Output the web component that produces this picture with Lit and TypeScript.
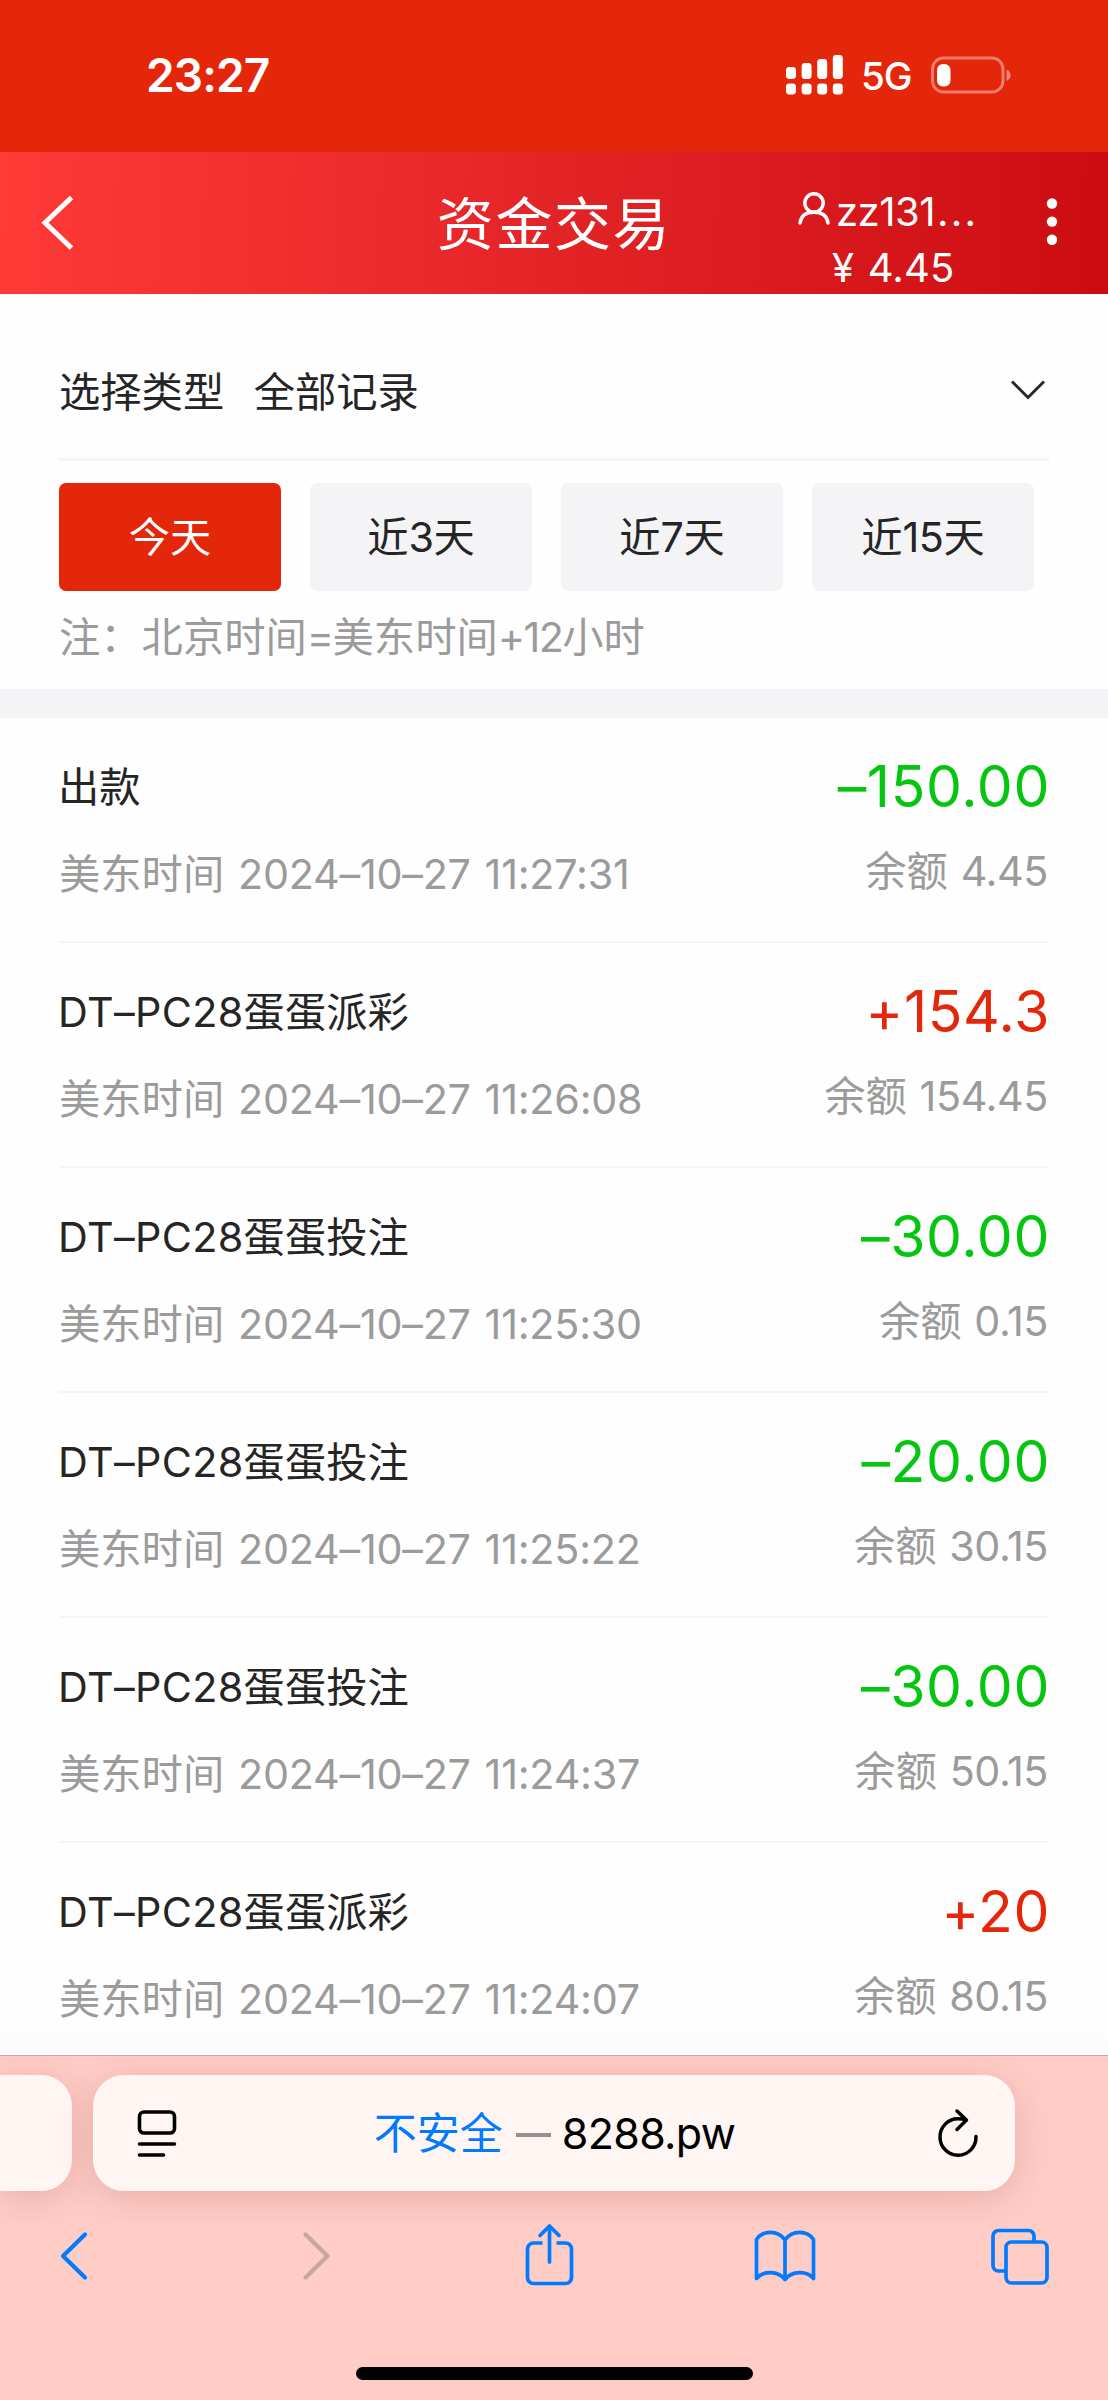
import { LitElement, html, css, svg } from "lit";
import { customElement, property } from "lit/decorators.js";
import { classMap } from "lit/directives/class-map.js";

interface Entry {
  title: string;
  latin: string;
  time: string;
  amount: string;
  balance: string;
}

const ENTRIES: Entry[] = [
  { latin: "", title: "出款", time: "11:27:31", amount: "–150.00", balance: "4.45" },
  { latin: "DT–PC28", title: "蛋蛋派彩", time: "11:26:08", amount: "+154.3", balance: "154.45" },
  { latin: "DT–PC28", title: "蛋蛋投注", time: "11:25:30", amount: "–30.00", balance: "0.15" },
  { latin: "DT–PC28", title: "蛋蛋投注", time: "11:25:22", amount: "–20.00", balance: "30.15" },
  { latin: "DT–PC28", title: "蛋蛋投注", time: "11:24:37", amount: "–30.00", balance: "50.15" },
  { latin: "DT–PC28", title: "蛋蛋派彩", time: "11:24:07", amount: "+20", balance: "80.15" },
];

const TABS: [string, string, string][] = [
  ["今天", "", ""],
  ["近", "3", "天"],
  ["近", "7", "天"],
  ["近", "15", "天"],
];

@customElement("status-bar")
class StatusBar extends LitElement {
  static styles = css`
    :host {
      display: flex;
      align-items: center;
      height: 152px;
      box-sizing: border-box;
      padding: 0 97px 2px 146px;
      background: #e4260a;
      color: #fff;
    }
    .clock {
      flex: 1;
      font-size: 46px;
      font-weight: 600;
      letter-spacing: -0.9px;
    }
    .signal {
      width: 57px;
      height: 40px;
    }
    .network {
      margin: 2px 21px 0 18px;
      width: 49px;
      font-size: 38.5px;
      font-weight: 500;
      letter-spacing: -1px;
      white-space: nowrap;
    }
    .battery {
      width: 80px;
      height: 38px;
    }
    svg {
      display: block;
    }
  `;
  render() {
    return html`
      <div class="clock">23:27</div>
      <svg class="signal" viewBox="0 0 57 40" fill="#fff">
        ${[12, 8, 4, 0].map(
          (top, i) => svg`
            <rect x=${i * 15.6} y=${top} width="10" height=${24 - top} rx="3.4"></rect>
            <rect x=${i * 15.6} y="28.5" width="10" height="11" rx="3.4"></rect>`
        )}
      </svg>
      <div class="network">5G</div>
      <svg class="battery" viewBox="0 0 80 38">
        <rect x="1.5" y="2" width="70.5" height="34" rx="11" fill="none" stroke="#fff" stroke-opacity=".4" stroke-width="3"></rect>
        <rect x="6" y="8" width="13.5" height="22.5" rx="6" fill="#fff"></rect>
        <path d="M75.5 13.5c5.4 2.4 5.4 9 0 11.6z" fill="#fff" fill-opacity=".45"></path>
      </svg>
    `;
  }
}

@customElement("title-bar")
class TitleBar extends LitElement {
  static styles = css`
    :host {
      display: grid;
      grid-template-columns: 430px 245px 1fr 110px;
      height: 141.5px;
      background: linear-gradient(92deg, #ff3a37 0%, #e32427 50%, #cb0d12 100%);
      color: #fff;
    }
    svg {
      display: block;
    }
    .back {
      width: 40px;
      height: 60px;
      margin: 41px 0 0 39px;
    }
    .title {
      padding: 3px 0 0 3px;
      text-align: center;
      font-size: 57px;
      line-height: 140px;
      letter-spacing: 1.6px;
      white-space: nowrap;
    }
    .account {
      padding-top: 32px;
      font-size: 40px;
      line-height: 56px;
      white-space: nowrap;
    }
    .user {
      display: flex;
      padding-left: 122px;
    }
    .user svg {
      width: 34px;
      height: 34px;
      margin: 7px 5px 0 0;
    }
    .name {
      letter-spacing: -0.5px;
    }
    .ellipsis {
      margin-left: 2px;
      letter-spacing: 2.2px;
    }
    .money {
      padding-left: 157px;
      letter-spacing: 0.2px;
      word-spacing: 2px;
    }
    .more {
      width: 12px;
      height: 50px;
      margin: 45px 0 0 48px;
    }
  `;
  render() {
    return html`
      <svg class="back" viewBox="0 0 40 60" fill="none" stroke="#fff" stroke-width="5">
        <path d="M32.5 4.5 6 29.8 32.5 55"></path>
      </svg>
      <div class="title">资金交易</div>
      <div class="account">
        <div class="user">
          <svg viewBox="0 0 34 34" fill="none" stroke="#fff" stroke-width="3.4" stroke-linecap="round">
            <circle cx="17" cy="12" r="9.2"></circle>
            <path d="M3 32C4 24.5 9.5 21.200 17 21.200S30 24.500 31 32"></path>
          </svg>
          <span class="name">zz131</span><span class="ellipsis">...</span>
        </div>
        <div class="money">¥ 4.45</div>
      </div>
      <svg class="more" viewBox="0 0 12 50" fill="#fff">
        <circle cx="6" cy="6.500" r="5.200"></circle>
        <circle cx="6" cy="24.600" r="5.200"></circle>
        <circle cx="6" cy="42.700" r="5.200"></circle>
      </svg>
    `;
  }
}

@customElement("record-filter")
class RecordFilter extends LitElement {
  static styles = css`
    :host {
      display: block;
      height: 395.5px;
      box-sizing: border-box;
      padding: 0 59px;
      color: #252525;
      font-size: 41.3px;
    }
    .type {
      display: flex;
      align-items: center;
      height: 167.5px;
      box-sizing: border-box;
      padding-top: 26px;
      border-bottom: 3px solid #f4f4f7;
    }
    .value {
      flex: 1;
      margin-left: 29.500px;
    }
    .arrow {
      width: 36px;
      height: 22px;
      margin: 2px 3px 0 0;
    }
    .tabs {
      display: flex;
      gap: 29px;
      margin-top: 21.500px;
    }
    .tab {
      width: 222px;
      height: 108px;
      line-height: 108px;
      border-radius: 7px;
      background: #f4f4f7;
      text-align: center;
    }
    .active {
      background: #e4260a;
      color: #fff;
    }
    .num {
      letter-spacing: -0.5px;
    }
    .note {
      margin-top: 16px;
      line-height: 60px;
      color: #9b9b9b;
      white-space: nowrap;
    }
    .note .num {
      letter-spacing: -1.600px;
    }
  `;
  render() {
    return html`
      <div class="type">
        <span>选择类型</span>
        <span class="value">全部记录</span>
        <svg class="arrow" viewBox="0 0 36 22" fill="none" stroke="#252525" stroke-width="2.800">
          <path d="M2 2.500 18 18.500 34 2.500"></path>
        </svg>
      </div>
      <div class="tabs">
        ${TABS.map(
          ([a, n, b], i) =>
            html`<div class=${classMap({ tab: true, active: i === 0 })}>${a}<span class="num">${n}</span>${b}</div>`
        )}
      </div>
      <div class="note">注：北京时间<span class="num">=</span>美东时间<span class="num">+12</span>小时</div>
    `;
  }
}

@customElement("record-row")
class RecordRow extends LitElement {
  @property({ attribute: false }) entry!: Entry;
  static styles = css`
    :host {
      display: grid;
      grid-template-columns: 1fr auto;
      grid-template-rows: 60px 60px;
      row-gap: 27px;
      height: 225px;
      box-sizing: border-box;
      margin: 0 59px;
      padding-top: 39px;
      border-bottom: 2px solid #f4f4f5;
      font-size: 41.3px;
      line-height: 60px;
      color: #252525;
      white-space: nowrap;
    }
    .latin {
      margin-left: -1px;
      letter-spacing: 0.350px;
    }
    .amount {
      margin-right: -1px;
      font-size: 57px;
      letter-spacing: 0.650px;
      text-align: right;
      color: #04c60e;
    }
    .plus {
      color: #e4260a;
    }
    .time,
    .balance {
      color: #9b9b9b;
    }
    .balance {
      text-align: right;
      margin: -3px 1px 0 0;
    }
    .digits {
      letter-spacing: -0.400px;
      word-spacing: 1.500px;
    }
    .time .digits {
      letter-spacing: -0.250px;
      word-spacing: 2.500px;
    }
  `;
  render() {
    const e = this.entry;
    return html`
      <div class="title"><span class="latin">${e.latin}</span>${e.title}</div>
      <div class=${classMap({ amount: true, plus: e.amount.startsWith("+") })}>${e.amount}</div>
      <div class="time">美东时间<span class="digits"> 2024–10–27 ${e.time}</span></div>
      <div class="balance">余额<span class="digits"> ${e.balance}</span></div>
    `;
  }
}

@customElement("browser-bar")
class BrowserBar extends LitElement {
  static styles = css`
    :host {
      display: flex;
      flex-direction: column;
      height: 345px;
      box-sizing: border-box;
      border-top: 1px solid #cba6a2;
      padding-top: 19px;
      background: #ffccc6;
      overflow: hidden;
    }
    svg {
      display: block;
      overflow: visible;
    }
    .pills {
      display: flex;
      gap: 21px;
      height: 116px;
    }
    .pill {
      background: #fff5f2;
      border-radius: 31px;
      box-shadow: 0 6px 34px rgba(120, 40, 30, 0.17);
    }
    .previous {
      width: 72px;
      border-radius: 0 31px 31px 0;
    }
    .address {
      display: flex;
      align-items: center;
      width: 922px;
      box-sizing: border-box;
      padding: 0 36px 0 44px;
    }
    .reader {
      width: 40px;
      height: 48px;
    }
    .url {
      flex: 1;
      display: flex;
      align-items: center;
      justify-content: center;
      margin-right: 5px;
      font-size: 43px;
      line-height: 60px;
      white-space: nowrap;
    }
    .unsafe {
      color: #007aff;
    }
    .dash {
      width: 35px;
      height: 3.600px;
      margin: 4px 11px 0 13px;
      background: #968f8e;
    }
    .host {
      letter-spacing: -0.700px;
      color: #000;
    }
    .reload {
      width: 42px;
      height: 48px;
    }
    .tools {
      display: flex;
      justify-content: space-between;
      margin-top: 31px;
      padding: 0 56px 0 42px;
      color: #007aff;
    }
    .tools svg {
      width: 64px;
      height: 68px;
    }
    .home {
      width: 397px;
      height: 13px;
      margin: 76.500px auto 0;
      border-radius: 7px;
      background: #000;
    }
  `;
  render() {
    return html`
      <div class="pills">
        <div class="pill previous"></div>
        <div class="pill address">
          <svg class="reader" viewBox="0 0 40 48" fill="none" stroke="#000" stroke-width="3.600" stroke-linecap="round">
            <rect x="2.500" y="3" width="35" height="21" rx="4.500"></rect>
            <path d="M2.500 35h35M2.500 46h24"></path>
          </svg>
          <div class="url">
            <span class="unsafe">不安全</span><span class="dash"></span><span class="host">8288.pw</span>
          </div>
          <svg class="reload" viewBox="0 0 42 48" fill="none" stroke="#000" stroke-width="3.500" stroke-linecap="round" stroke-linejoin="round">
            <path d="M39 27.500a18 18.300 0 1 1-18-17.800c3 0 5.500.3 8 1.300"></path>
            <path d="M20 2l9.500 9L20 20.500"></path>
          </svg>
        </div>
      </div>
      <div class="tools">
        <svg viewBox="0 0 64 68" fill="none" stroke="currentColor" stroke-width="4.200" stroke-linecap="round" stroke-linejoin="round">
          <path d="M43 12.500 21 34l22 21.500"></path>
        </svg>
        <svg viewBox="0 0 64 68" fill="none" stroke="#c7a5a1" stroke-width="4.200" stroke-linecap="round" stroke-linejoin="round">
          <path d="M26.500 12.500 48.500 34 26.500 55.500"></path>
        </svg>
        <svg viewBox="0 0 64 68" fill="none" stroke="currentColor" stroke-width="3.700" stroke-linejoin="round">
          <path d="M27.500 21h-9a6 6 0 0 0-6 6v28.500a6 6 0 0 0 6 6h32a6 6 0 0 0 6-6V27a6 6 0 0 0-6-6h-9"></path>
          <path d="M34.500 40V5M25 13.500 34.500 4l9.500 9.500" stroke-linecap="round"></path>
        </svg>
        <svg viewBox="0 0 64 68" fill="none" stroke="currentColor" stroke-width="3.700" stroke-linejoin="round" stroke-linecap="round">
          <path d="M33 18C26 8 11 8 4.500 17.500V56.500C11 48.500 26 48.500 33 57.500 40 48.500 55 48.500 61.500 56.500V17.500C55 8 40 8 33 18ZM33 18V57.500"></path>
        </svg>
        <svg viewBox="0 0 64 68" fill="none" stroke="currentColor" stroke-width="3.700">
          <rect x="18" y="20" width="41" height="41" rx="5.500"></rect>
          <path d="M46 20v-6a5.500 5.500 0 0 0-5.500-5.500h-30A5.500 5.500 0 0 0 5 14v29.500a5.500 5.500 0 0 0 5.500 5.500H18"></path>
        </svg>
      </div>
      <div class="home"></div>
    `;
  }
}

@customElement("app-root")
class AppRoot extends LitElement {
  static styles = css`
    :host {
      display: flex;
      flex-direction: column;
      width: 1108px;
      height: 2400px;
      overflow: hidden;
      background: #fefefe;
      font-family: Inter, "Noto Sans CJK SC", sans-serif;
      font-feature-settings: "calt" 0;
    }
    .band {
      height: 29px;
      background: #f4f4f7;
    }
    .list {
      height: 1337px;
      overflow: hidden;
      background: linear-gradient(#fefefe calc(100% - 30px), #fbfbfb);
    }
  `;
  render() {
    return html`
      <status-bar></status-bar>
      <title-bar></title-bar>
      <record-filter></record-filter>
      <div class="band"></div>
      <div class="list">${ENTRIES.map((e) => html`<record-row .entry=${e}></record-row>`)}</div>
      <browser-bar></browser-bar>
    `;
  }
}
